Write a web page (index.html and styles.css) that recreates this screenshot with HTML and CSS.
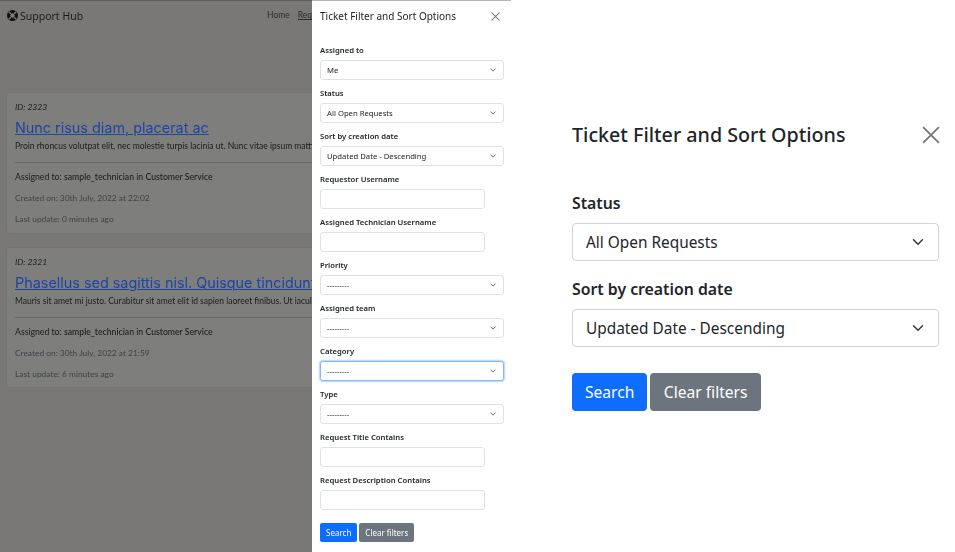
FILE: index.html
```html
<!DOCTYPE html>
<html lang="en">
<head>
  <meta charset="UTF-8" />
  <title>Support Hub - Ticket Filter</title>
  <link rel="stylesheet" href="styles.css">
</head>
<body>
  <div class="phone">
    <div class="page">
      <nav class="navbar">
        <a class="brand">
          <svg class="brand-icon" viewBox="0 0 16 16" width="11" height="11">
            <circle cx="8" cy="8" r="8" fill="#111"/>
            <circle cx="8" cy="8" r="3.2" fill="#7b7b79"/>
            <path d="M2.6 2.6l3 3M13.4 2.6l-3 3M2.6 13.4l3-3M13.4 13.4l-3-3" stroke="#7b7b79" stroke-width="2"/>
          </svg>
          Support Hub
        </a>
        <div class="nav-links">
          <a>Home</a>
          <a class="current">Req</a>
        </div>
      </nav>

      <div class="ticket">
        <p class="ticket-id">ID: 2323</p>
        <a class="ticket-title">Nunc risus diam, placerat ac</a>
        <p class="ticket-text">Proin rhoncus volutpat elit, nec molestie turpis lacinia ut. Nunc vitae ipsum mattis</p>
        <hr>
        <p class="ticket-assigned">Assigned to: <b>sample_technician</b> in <b>Customer Service</b></p>
        <p class="ticket-muted">Created on: 30th July, 2022 at 22:02</p>
        <p class="ticket-muted">Last update: 0 minutes ago</p>
      </div>

      <div class="ticket">
        <p class="ticket-id">ID: 2321</p>
        <a class="ticket-title">Phasellus sed sagittis nisl. Quisque tincidunt</a>
        <p class="ticket-text">Mauris sit amet mi justo. Curabitur sit amet elit id sapien laoreet finibus. Ut iaculis</p>
        <hr>
        <p class="ticket-assigned">Assigned to: <b>sample_technician</b> in <b>Customer Service</b></p>
        <p class="ticket-muted">Created on: 30th July, 2022 at 21:59</p>
        <p class="ticket-muted">Last update: 6 minutes ago</p>
      </div>
    </div>

    <aside class="offcanvas">
      <div class="offcanvas-header">
        <h5>Ticket Filter and Sort Options</h5>
        <svg class="close-icon" viewBox="0 0 16 16" width="9" height="9">
          <path d="M1 1l14 14M15 1L1 15" stroke="#777" stroke-width="1.8" fill="none"/>
        </svg>
      </div>
      <form class="mini-form">
        <label>Assigned to</label>
        <select><option>Me</option></select>
        <label>Status</label>
        <select><option>All Open Requests</option></select>
        <label>Sort by creation date</label>
        <select><option>Updated Date - Descending</option></select>
        <label>Requestor Username</label>
        <input type="text">
        <label>Assigned Technician Username</label>
        <input type="text">
        <label>Priority</label>
        <select><option>---------</option></select>
        <label>Assigned team</label>
        <select><option>---------</option></select>
        <label>Category</label>
        <select class="focused"><option>---------</option></select>
        <label>Type</label>
        <select><option>---------</option></select>
        <label>Request Title Contains</label>
        <input type="text">
        <label>Request Description Contains</label>
        <input type="text">
        <div class="buttons">
          <button type="button" class="btn-search">Search</button>
          <button type="button" class="btn-clear">Clear filters</button>
        </div>
      </form>
    </aside>
  </div>

  <main class="detail">
    <div class="detail-header">
      <h5>Ticket Filter and Sort Options</h5>
      <svg class="close-icon" viewBox="0 0 16 16" width="18" height="18">
        <path d="M1 1l14 14M15 1L1 15" stroke="#777" stroke-width="1.6" fill="none"/>
      </svg>
    </div>
    <form class="big-form">
      <label>Status</label>
      <select><option>All Open Requests</option></select>
      <label>Sort by creation date</label>
      <select><option>Updated Date - Descending</option></select>
      <div class="buttons">
        <button type="button" class="btn-search">Search</button>
        <button type="button" class="btn-clear">Clear filters</button>
      </div>
    </form>
  </main>
</body>
</html>
```

FILE: styles.css
```css
* {
  box-sizing: border-box;
}

body {
  margin: 0;
  height: 552px;
  overflow: hidden;
  display: flex;
  background: #fff;
  color: #212529;
  font-family: "Noto Sans", sans-serif;
}

p {
  margin: 0;
}

/* left half: the small screenshot of the app with the drawer open */
.phone {
  display: flex;
  width: 511px;
  height: 552px;
  flex: none;
  overflow: hidden;
}

/* page behind the drawer, colours already dimmed by the backdrop */
.page {
  width: 312px;
  height: 100%;
  flex: none;
  padding: 0 0 0 6px;
  overflow: hidden;
  background: #7a7876;
  border-top: 1px solid #5e5e5e;
  color: #1c1c1c;
  font-family: Lato, sans-serif;
  filter: blur(0.3px);
}

.navbar {
  display: flex;
  height: 91px;
  padding: 7px 0 0 1px;
}

.brand {
  display: flex;
  flex: none;
  align-items: center;
  gap: 2px;
  height: 15px;
  font-family: "Noto Sans", sans-serif;
  font-size: 10.5px;
  white-space: nowrap;
}

.nav-links {
  display: flex;
  flex: none;
  gap: 8px;
  margin-left: 184px;
  padding-top: 2px;
  font-size: 8.5px;
  white-space: nowrap;
  color: #2b2b2b;
}

.nav-links .current {
  text-decoration: underline;
}

.ticket {
  width: 340px;
  height: 141.5px;
  margin-bottom: 13px;
  padding: 8px 8px 0;
  background: #7e7e7d;
  border: 1px solid #737371;
  border-radius: 3px;
  white-space: nowrap;
  overflow: hidden;
}

.ticket-id {
  font-size: 8.5px;
  font-style: italic;
  line-height: 12px;
}

.ticket-title {
  display: block;
  margin-top: 6px;
  font-family: Inter, sans-serif;
  font-size: 14.4px;
  line-height: 18px;
  color: #1c45a8;
  text-decoration: underline;
  text-decoration-thickness: 1px;
}

.ticket-text {
  margin-top: 3px;
  font-size: 8.5px;
  line-height: 13px;
}

.ticket hr {
  margin: 9px 0 0;
  border: 0;
  border-top: 1px solid #6a6a6a;
}

.ticket-assigned {
  margin-top: 8px;
  font-size: 8.7px;
  line-height: 12px;
}

.ticket-assigned b {
  font-weight: 500;
}

.ticket-muted {
  margin-top: 9px;
  font-size: 8.4px;
  line-height: 12px;
  color: #3d4347;
}

.offcanvas {
  width: 199px;
  height: 552px;
  flex: none;
  padding: 0 8px;
  background: #fff;
  border-top: 1px solid #b5b5b5;
  filter: blur(0.25px);
}

.offcanvas-header {
  display: flex;
  justify-content: space-between;
  align-items: center;
  height: 30px;
  padding-right: 3px;
}

.offcanvas-header h5 {
  margin: 0;
  font-size: 10px;
  font-weight: 400;
  white-space: nowrap;
}

.mini-form {
  display: flex;
  flex-direction: column;
  padding-top: 13px;
}

.mini-form label {
  height: 16px;
  font-size: 7.7px;
  font-weight: 600;
  line-height: 13px;
}

.mini-form select,
.mini-form input {
  height: 20px;
  margin-bottom: 7px;
  padding: 0 16px 0 6px;
  border: 1px solid #dee2e6;
  border-radius: 3px;
  font-family: inherit;
  font-size: 7.7px;
  color: #212529;
  background-color: #fff;
}

.mini-form select {
  width: 184px;
  appearance: none;
  background-image: url("data:image/svg+xml,%3csvg xmlns='http://www.w3.org/2000/svg' viewBox='0 0 16 16'%3e%3cpath fill='none' stroke='%23343a40' stroke-linecap='round' stroke-linejoin='round' stroke-width='2' d='M2 5l6 6 6-6'/%3e%3c/svg%3e");
  background-repeat: no-repeat;
  background-position: right 7px center;
  background-size: 6px 6px;
}

.mini-form input {
  width: 165px;
}

.mini-form select.focused {
  border-color: #86b7fe;
  box-shadow: 0 0 0 1.2px rgba(13, 110, 253, 0.25);
}

.mini-form .buttons {
  display: flex;
  gap: 2px;
  margin-top: 6px;
}

.mini-form button {
  height: 19px;
  padding: 0 6px;
  border: 0;
  border-radius: 2px;
  font-family: inherit;
  font-size: 8px;
  color: #fff;
}

.btn-search {
  background: #0d6efd;
}

.btn-clear {
  background: #6c757d;
}

/* right half: enlarged part of the drawer */
.detail {
  flex: 1;
  padding: 122px 15px 0 61px;
}

.detail-header {
  display: flex;
  justify-content: space-between;
  align-items: center;
  height: 26px;
}

.detail-header h5 {
  margin: 0;
  font-size: 19.7px;
  font-weight: 500;
  line-height: 26px;
}

.big-form {
  display: flex;
  flex-direction: column;
  padding-top: 43px;
  padding-right: 1px;
}

.big-form label {
  height: 32px;
  font-size: 15.8px;
  font-weight: 600;
  line-height: 24px;
}

.big-form select {
  width: 100%;
  height: 38px;
  margin-bottom: 16px;
  padding: 0 36px 0 13px;
  border: 1px solid #ced4da;
  border-radius: 4px;
  font-family: inherit;
  font-size: 15.4px;
  color: #212529;
  background-color: #fff;
  appearance: none;
  background-image: url("data:image/svg+xml,%3csvg xmlns='http://www.w3.org/2000/svg' viewBox='0 0 16 16'%3e%3cpath fill='none' stroke='%23343a40' stroke-linecap='round' stroke-linejoin='round' stroke-width='2' d='M2 5l6 6 6-6'/%3e%3c/svg%3e");
  background-repeat: no-repeat;
  background-position: right 14px center;
  background-size: 12px 12px;
}

.big-form .buttons {
  display: flex;
  gap: 3px;
  margin-top: 10px;
}

.big-form button {
  height: 38px;
  padding: 0 13px;
  border: 0;
  border-radius: 4px;
  font-family: inherit;
  font-size: 15.6px;
  color: #fff;
}

.big-form .btn-clear {
  padding: 0 13.5px;
}
```
